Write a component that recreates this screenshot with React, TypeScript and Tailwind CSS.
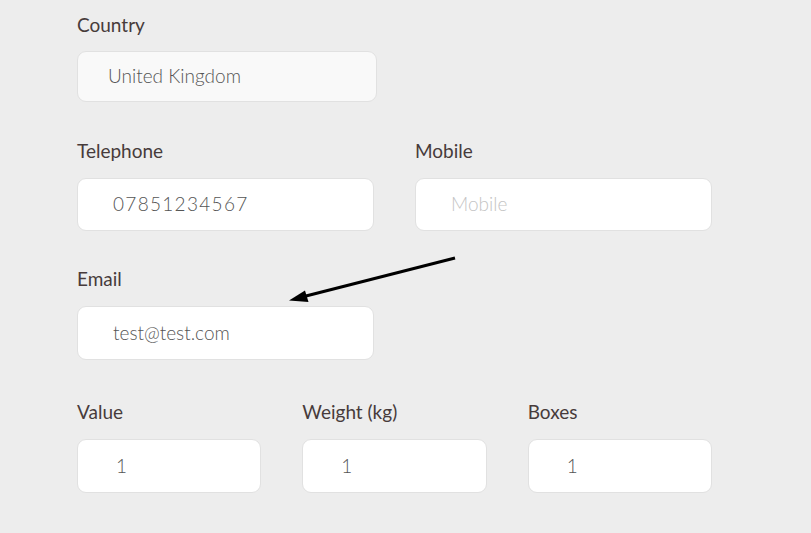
import React from "react";

const font = { fontFamily: "Lato, 'Open Sans', sans-serif" };

function Label({ children }: { children: React.ReactNode }) {
  return <div className="text-[19px] leading-[24px] text-[#473b3b]">{children}</div>;
}

function Input({
  value,
  placeholder,
  className = "",
  textClass = "",
}: {
  value?: string;
  placeholder?: string;
  className?: string;
  textClass?: string;
}) {
  return (
    <div
      className={`flex items-center rounded-[9px] border border-[#e1e1e1] bg-white pl-[35px] text-[19px] font-light ${className}`}
    >
      {value ? (
        <span className={`text-[#555555] ${textClass}`}>{value}</span>
      ) : (
        <span className="text-[#c4c4c4]">{placeholder}</span>
      )}
    </div>
  );
}

export default function App() {
  return (
    <div className="relative h-[533px] w-full overflow-hidden bg-[#ededed]" style={font}>
      <div className="ml-[77px] flex w-[635px] flex-col pt-[13px]">
        {/* Country */}
        <Label>Country</Label>
        <Input
          value="United Kingdom"
          className="mt-[14px] h-[51px] w-[300px] !bg-[#f9f9f9] !pl-[30px]"
        />

        {/* Telephone / Mobile */}
        <div className="mt-[37px] grid grid-cols-2 gap-x-[41px]">
          <div className="flex flex-col">
            <Label>Telephone</Label>
            <Input value="07851234567" textClass="tracking-[1.3px]" className="mt-[15px] h-[53px]" />
          </div>
          <div className="flex flex-col">
            <Label>Mobile</Label>
            <Input placeholder="Mobile" className="mt-[15px] h-[53px]" />
          </div>
        </div>

        {/* Email */}
        <div className="mt-[36px] grid grid-cols-2 gap-x-[41px]">
          <div className="flex flex-col">
            <Label>Email</Label>
            <Input value="test@test.com" textClass="text-[#5a5050]" className="mt-[15px] h-[54px]" />
          </div>
        </div>

        {/* Value / Weight / Boxes */}
        <div className="mt-[40px] grid grid-cols-3 gap-x-[41px]">
          <div className="flex flex-col">
            <Label>Value</Label>
            <Input value="1" className="mt-[15px] h-[54px] !pl-[38px]" />
          </div>
          <div className="flex flex-col">
            <Label>Weight (kg)</Label>
            <Input value="1" className="mt-[15px] h-[54px] !pl-[38px]" />
          </div>
          <div className="flex flex-col">
            <Label>Boxes</Label>
            <Input value="1" className="mt-[15px] h-[54px] !pl-[38px]" />
          </div>
        </div>

        <div className="mt-[36px]">
          <Label>Collection Date</Label>
        </div>
      </div>

      <svg
        className="pointer-events-none absolute left-0 top-0"
        width="811"
        height="533"
        viewBox="0 0 811 533"
      >
        <line x1="455" y1="258" x2="302" y2="297" stroke="#000" strokeWidth="3" />
        <polygon points="289,300.5 305,290.5 308.5,302" fill="#000" />
      </svg>
    </div>
  );
}
